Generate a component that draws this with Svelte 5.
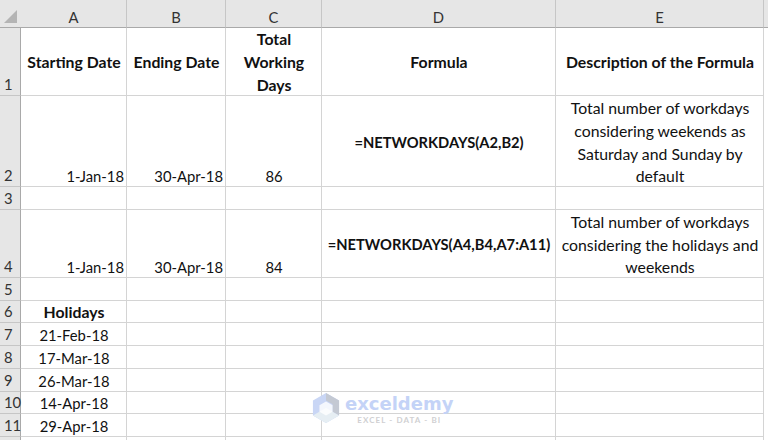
<script>
  const columns = ["A", "B", "C", "D", "E"];

  const rows = [
    {
      n: 1, h: 68,
      cells: [
        { t: "Starting Date", c: "center head mid" },
        { t: "Ending Date", c: "center head mid" },
        { t: "Total Working Days", c: "center head mid" },
        { t: "Formula", c: "center head mid" },
        { t: "Description of the Formula", c: "center head mid" },
      ],
    },
    {
      n: 2, h: 91,
      cells: [
        { t: "1-Jan-18", c: "right num" },
        { t: "30-Apr-18", c: "right num" },
        { t: "86", c: "center num" },
        { t: "=NETWORKDAYS(A2,B2)", c: "center formula mid" },
        { t: "Total number of workdays considering weekends as Saturday and Sunday by default", c: "center text" },
      ],
    },
    { n: 3, h: 23, cells: [] },
    {
      n: 4, h: 68,
      cells: [
        { t: "1-Jan-18", c: "right num" },
        { t: "30-Apr-18", c: "right num" },
        { t: "84", c: "center num" },
        { t: "=NETWORKDAYS(A4,B4,A7:A11)", c: "center formula mid" },
        { t: "Total number of workdays considering the holidays and weekends", c: "center text" },
      ],
    },
    { n: 5, h: 23, cells: [] },
    { n: 6, h: 22, cells: [{ t: "Holidays", c: "center head" }] },
    { n: 7, h: 23, cells: [{ t: "21-Feb-18", c: "center num" }] },
    { n: 8, h: 23, cells: [{ t: "17-Mar-18", c: "center num" }] },
    { n: 9, h: 23, cells: [{ t: "26-Mar-18", c: "center num" }] },
    { n: 10, h: 22, cells: [{ t: "14-Apr-18", c: "center num" }] },
    { n: 11, h: 23, cells: [{ t: "29-Apr-18", c: "center num" }] },
    { n: 12, h: 23, cells: [] },
  ];
</script>

<div class="sheet">
  <div class="corner"><span class="tri"></span></div>
  {#each columns as col}
    <div class="colhead">{col}</div>
  {/each}
  <div class="colhead last"></div>

  {#each rows as row}
    <div class="rowhead" style="height: {row.h}px">{row.n === 12 ? "" : row.n}</div>
    {#each columns as col, i}
      <div class="cell {row.cells[i]?.c ?? ''}" style="height: {row.h}px">
        <span>{row.cells[i]?.t ?? ""}</span>
      </div>
    {/each}
    <div class="cell last"></div>
  {/each}

  <div class="mark">
    <svg width="28" height="32" viewBox="0 0 30 34">
      <path d="M15 1 L29 9 L29 25 L15 33 L1 25 L1 9 Z" fill="#c9d6f5" />
      <path d="M15 1 L29 9 L29 25 L22 21 L22 13 L15 9 Z" fill="#c4c9d3" />
      <path d="M1 25 L15 17 L29 25 L15 33 Z" fill="#e6eef3" />
      <path d="M15 10 L22 14 L22 21 L15 25 L8 21 L8 14 Z" fill="#fff" opacity="0.8" />
    </svg>
    <div class="words">
      <span class="brand">exceldemy</span>
      <span class="sub">EXCEL - DATA - BI</span>
    </div>
  </div>
</div>

<style>
  :global(body) {
    margin: 0;
    background: #fff;
    overflow: hidden;
  }

  .sheet {
    position: relative;
    display: grid;
    grid-template-columns: 21px 106px 99px 96px 234px 208px 4px;
    align-content: start;
    width: 768px;
    height: 440px;
    overflow: hidden;
    font-family: Lato, "Liberation Sans", sans-serif;
    font-size: 14.8px;
    line-height: 22.7px;
    color: #111;
  }

  .corner {
    position: relative;
    height: 28px;
    background: #e6e6e6;
    border-bottom: 1px solid #a9a9a9;
    box-sizing: border-box;
  }

  .tri {
    position: absolute;
    right: 4px;
    bottom: 4px;
    width: 0;
    height: 0;
    border-left: 13px solid transparent;
    border-bottom: 13px solid #b4b4b4;
  }

  .colhead {
    height: 28px;
    padding-top: 6px;
    box-sizing: border-box;
    background: #e6e6e6;
    border-bottom: 1px solid #a9a9a9;
    border-right: 1px solid #c6c6c6;
    text-align: center;
    line-height: 22px;
    color: #333;
  }

  .colhead.last {
    border-right: none;
  }

  .rowhead {
    box-sizing: border-box;
    background: #e6e6e6;
    border-bottom: 1px solid #c6c6c6;
    border-right: 1px solid #a9a9a9;
    display: flex;
    align-items: flex-end;
    padding-left: 4px;
    line-height: 21px;
    color: #333;
  }

  .cell {
    box-sizing: border-box;
    display: flex;
    align-items: flex-end;
    padding: 0 2px 0 3px;
    border-bottom: 1px solid #d4d4d4;
    border-right: 1px solid #d4d4d4;
    min-width: 0;
  }

  .cell span {
    margin-bottom: -2px;
  }

  .cell.last {
    border-right: none;
    border-bottom: none;
  }

  .center {
    justify-content: center;
    text-align: center;
  }

  .right {
    justify-content: flex-end;
    text-align: right;
  }

  .head {
    font-weight: 700;
    font-size: 15.8px;
  }

  .formula {
    font-weight: 700;
    font-size: 14.7px;
    white-space: nowrap;
  }

  .text {
    font-size: 15.8px;
  }

  .mid {
    align-items: center;
  }

  .cell.mid span {
    margin-bottom: 0;
    margin-top: 2px;
  }

  .mark {
    position: absolute;
    left: 312px;
    top: 392px;
    display: flex;
    gap: 5px;
    pointer-events: none;
  }

  .words {
    display: flex;
    flex-direction: column;
  }

  .brand {
    font-family: "DejaVu Sans", sans-serif;
    font-weight: 700;
    font-size: 18px;
    line-height: 24px;
    color: #c4d3f7;
  }

  .sub {
    font-size: 8px;
    font-weight: 700;
    line-height: 9px;
    letter-spacing: 1.1px;
    color: #d0d0d2;
    text-align: center;
  }
</style>
